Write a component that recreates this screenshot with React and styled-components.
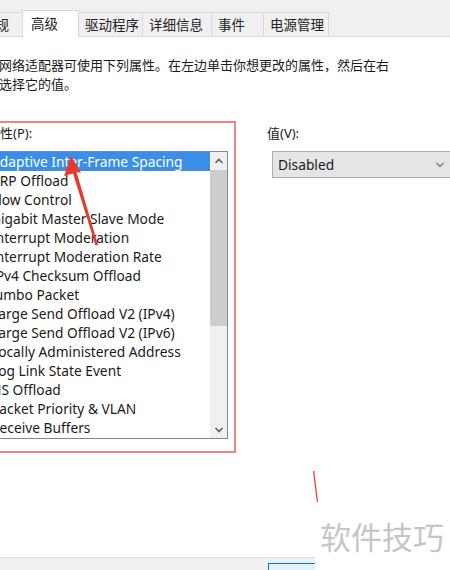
import React from 'react'
import styled, { createGlobalStyle } from 'styled-components'

const GlobalStyle = createGlobalStyle`
  body {
    margin: 0;
    background: #fff;
  }
`

const Window = styled.div`
  width: 450px;
  height: 570px;
  position: relative;
  overflow: hidden;
  display: flex;
  flex-direction: column;
  background: #fff;
  color: #111;
  font-family: "Noto Sans", "Noto Sans CJK SC", sans-serif;
  font-size: 13px;
`

const TabStrip = styled.div`
  height: 37px;
  box-sizing: border-box;
  display: flex;
  align-items: flex-end;
  background: #f0f0f0;
  border-bottom: 1px solid #d9d9d9;
  margin-left: -25px;
`

const Tab = styled.div`
  flex-shrink: 0;
  width: ${p => p.w}px;
  height: ${p => (p.active ? 27 : 24)}px;
  box-sizing: border-box;
  margin-bottom: ${p => (p.active ? -1 : 0)}px;
  padding-left: ${p => (p.active ? 8 : 6)}px;
  background: ${p => (p.active ? '#fff' : '#f0f0f0')};
  border: 1px solid #d9d9d9;
  border-bottom: none;
  margin-right: -1px;
  font-family: "Noto Sans CJK SC", sans-serif;
  font-size: 13.5px;
  line-height: ${p => (p.active ? 24 : 23)}px;
  white-space: nowrap;
  color: #222;
  position: relative;
  z-index: ${p => (p.active ? 1 : 0)};
`

const Description = styled.p`
  margin: 18px 0 0 -14px;
  font-family: "Noto Sans CJK SC", sans-serif;
  font-size: 13px;
  line-height: 19px;
  white-space: nowrap;
  color: #1a1a1a;
`

const GroupRow = styled.div`
  display: flex;
  align-items: flex-start;
  margin: 28px 0 0 -21px;
`

const GroupBox = styled.div`
  flex-shrink: 0;
  width: 257px;
  box-sizing: border-box;
  border: 2px solid #e98787;
  padding: 1px 6px 12px 9px;
`

const Label = styled.div`
  height: 19px;
  line-height: 19px;
  margin-left: ${p => p.shift || 0}px;
  font-family: "Noto Sans", "Noto Sans CJK SC", sans-serif;
  font-size: 13px;
  color: #1a1a1a;
`

const ListBox = styled.div`
  margin-top: 8px;
  height: 288px;
  box-sizing: border-box;
  border: 1px solid #828790;
  display: flex;
  background: #fff;
`

const Items = styled.div`
  flex: 1;
  overflow: hidden;
`

const Item = styled.div`
  height: 19px;
  line-height: 19px;
  padding-left: 0;
  font-size: 13.75px;
  white-space: nowrap;
  background: ${p => (p.selected ? '#3a8ee8' : 'transparent')};
  color: ${p => (p.selected ? '#fff' : '#1a1a1a')};
`

const ScrollBar = styled.div`
  width: 17px;
  display: flex;
  flex-direction: column;
  background: #f0f0f0;
`

const ScrollButton = styled.div`
  height: 17px;
  display: flex;
  align-items: center;
  justify-content: center;
`

const Thumb = styled.div`
  height: 156px;
  margin-top: 1px;
  background: #cdcdcd;
`

const Track = styled.div`
  flex: 1;
`

const ValueColumn = styled.div`
  flex-shrink: 0;
  margin: 3px 0 0 31px;
  display: flex;
  flex-direction: column;
`

const Select = styled.div`
  margin: 8px 0 0 5px;
  width: 200px;
  height: 27px;
  box-sizing: border-box;
  border: 1px solid #adadad;
  background: #e5e5e5;
  display: flex;
  align-items: center;
  padding-left: 5px;
  font-size: 13.75px;
  color: #1a1a1a;
  svg {
    margin-left: auto;
    margin-right: 26px;
  }
`

const Footer = styled.div`
  margin-top: auto;
  height: 13px;
  box-sizing: border-box;
  background: #f0f0f0;
  border-top: 1px solid #dcdcdc;
  padding: 5px 0 0 268px;
  overflow: hidden;
`

const FooterButton = styled.div`
  width: 75px;
  height: 23px;
  box-sizing: border-box;
  border: 1px solid #0078d7;
  background: #e5f1fb;
`

const Annotations = styled.svg`
  position: absolute;
  left: 0;
  top: 0;
  pointer-events: none;
`

const Watermark = styled.div`
  position: absolute;
  right: 0;
  bottom: 0;
  width: 135px;
  height: 55px;
  box-sizing: border-box;
  padding: 3px 0 0 5px;
  background: #fff;
  font-family: "Noto Sans CJK SC", sans-serif;
  font-size: 31px;
  line-height: 36px;
  color: #c6c6c6;
  white-space: nowrap;
`

const tabs = [
  { label: '常规', w: 48 },
  { label: '高级', w: 57, active: true },
  { label: '驱动程序', w: 65 },
  { label: '详细信息', w: 70 },
  { label: '事件', w: 53 },
  { label: '电源管理', w: 66 },
]

const properties = [
  'Adaptive Inter-Frame Spacing',
  'ARP Offload',
  'Flow Control',
  'Gigabit Master Slave Mode',
  'Interrupt Moderation',
  'Interrupt Moderation Rate',
  'IPv4 Checksum Offload',
  'Jumbo Packet',
  'Large Send Offload V2 (IPv4)',
  'Large Send Offload V2 (IPv6)',
  'Locally Administered Address',
  'Log Link State Event',
  'NS Offload',
  'Packet Priority & VLAN',
  'Receive Buffers',
]

const Chevron = ({ up, color = '#606060', w = 1.6 }) => (
  <svg width="10" height="8" viewBox="0 0 10 8">
    <polyline
      points={up ? '1.5,6 5,2.5 8.5,6' : '1.5,2 5,5.5 8.5,2'}
      fill="none"
      stroke={color}
      strokeWidth={w}
    />
  </svg>
)

const App = () => {
  return (
    <>
      <GlobalStyle />
      <Window>
        <TabStrip>
          {tabs.map(t => (
            <Tab key={t.label} w={t.w} active={t.active}>{t.label}</Tab>
          ))}
        </TabStrip>

        <Description>
          此网络适配器可使用下列属性。在左边单击你想更改的属性，然后在右
          <br />
          边选择它的值。
        </Description>

        <GroupRow>
          <GroupBox>
            <Label shift={-3}>属性(P):</Label>
            <ListBox>
              <Items>
                {properties.map((p, i) => (
                  <Item key={p} selected={i === 0}>{p}</Item>
                ))}
              </Items>
              <ScrollBar>
                <ScrollButton><Chevron up /></ScrollButton>
                <Thumb />
                <Track />
                <ScrollButton><Chevron /></ScrollButton>
              </ScrollBar>
            </ListBox>
          </GroupBox>

          <ValueColumn>
            <Label>值(V):</Label>
            <Select>
              Disabled
              <Chevron color="#707070" w={1.1} />
            </Select>
          </ValueColumn>
        </GroupRow>

        <Footer>
          <FooterButton />
        </Footer>

        <Annotations width="450" height="570" viewBox="0 0 450 570">
          <polygon
            points="71,156 81,173 76.5,172 98,245 95.5,245.5 73,173.5 64,176"
            fill="#e8392f"
          />
          <polygon points="313,471 314.3,471 318,502 316.8,502" fill="#e8392f" />
        </Annotations>

        <Watermark>软件技巧</Watermark>
      </Window>
    </>
  )
}

export default App
